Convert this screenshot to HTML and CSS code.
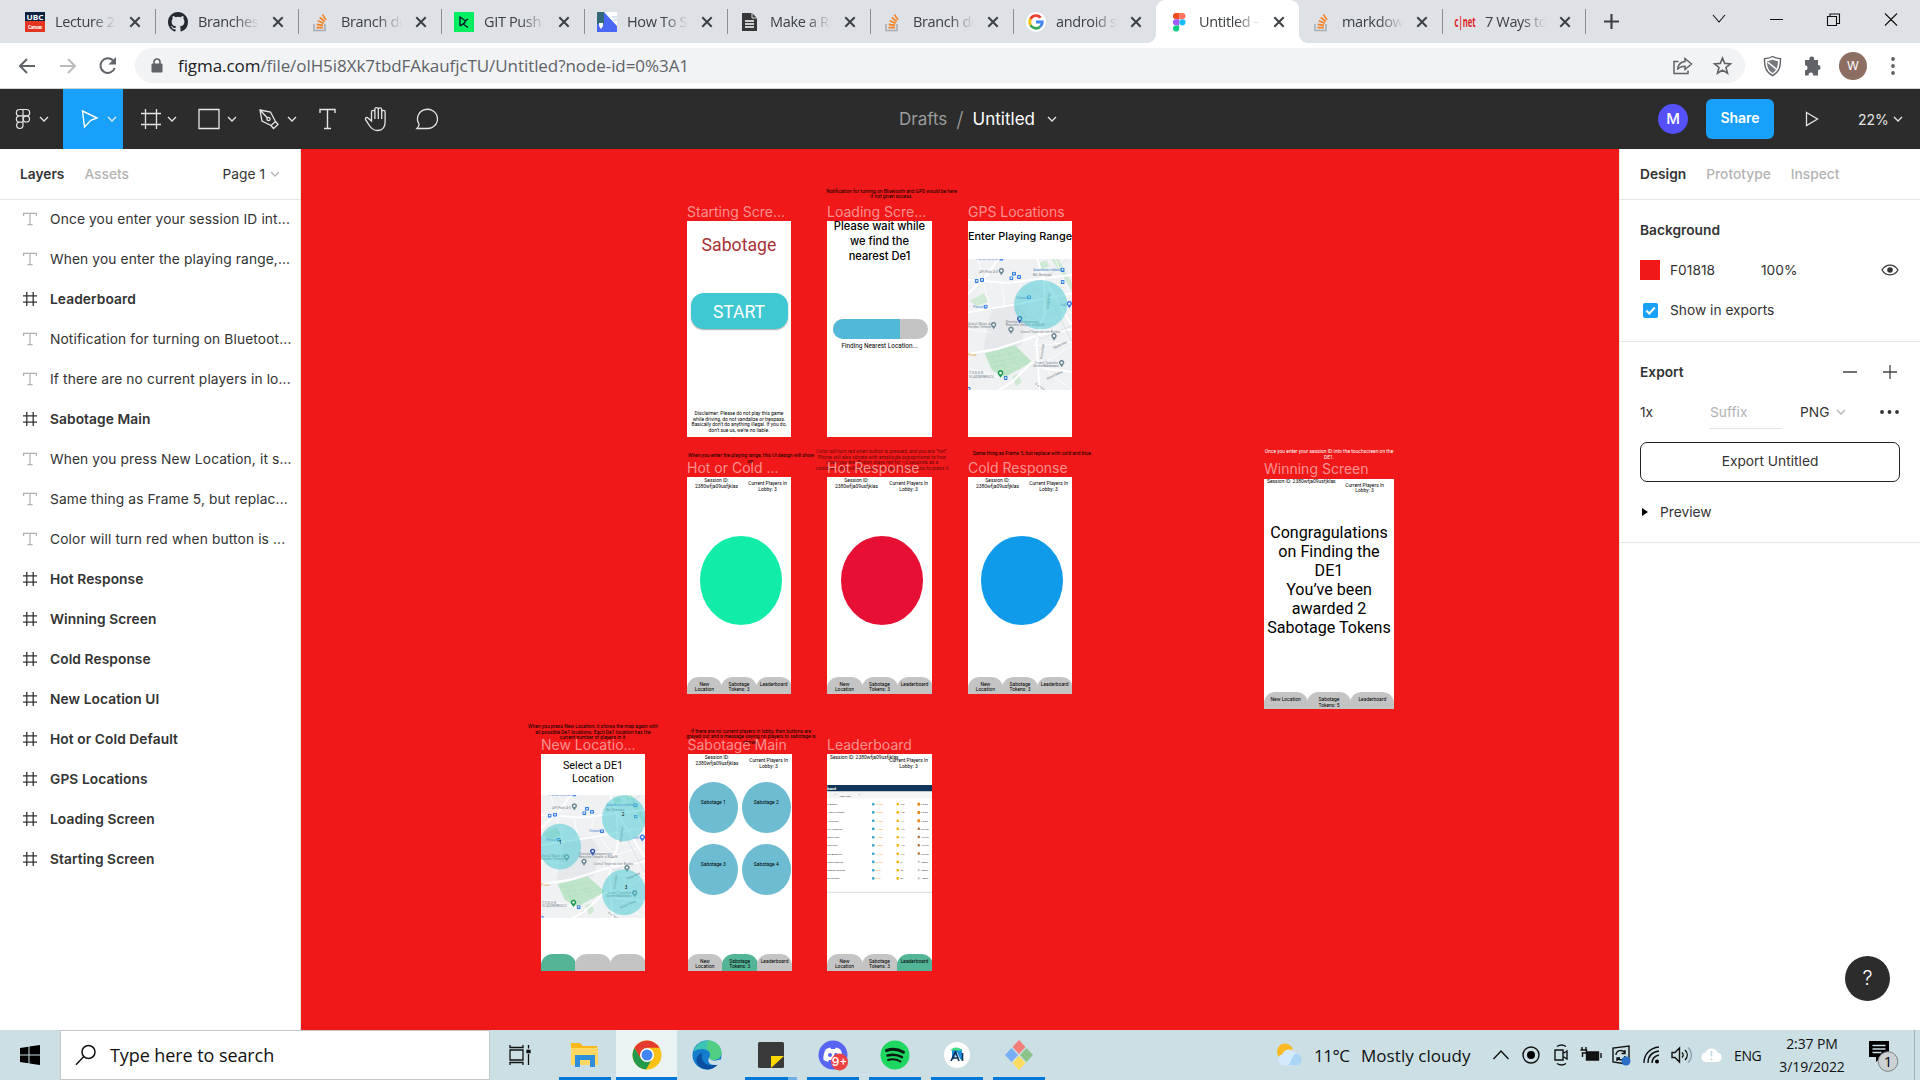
FILE: index.html
```html
<!DOCTYPE html>
<html lang="en">
<head>
<meta charset="utf-8">
<title>Untitled – Figma</title>
<link rel="stylesheet" href="styles.css">
</head>
<body>
<svg class="defs" aria-hidden="true">
  <symbol id="chev" viewBox="0 0 10 10"><path d="M1 3l4 4 4-4" fill="none" stroke="currentColor" stroke-width="1.300"/></symbol>
  <symbol id="x" viewBox="0 0 12 12"><path d="M1.300 1.300l9.400 9.400M10.700 1.300L1.300 10.700" fill="none" stroke="#3c4043" stroke-width="2"/></symbol>
  <symbol id="so" viewBox="0 0 20 20"><path d="M3 12v6.500h11V12" fill="none" stroke="#a9adb3" stroke-width="1.600"/><path d="M5.500 15.700h6.500M5.700 12.300l6.400 1M6.700 8.800l6 2.400M8.700 5.400l5 4.200M11.400 2.500l3.600 5.400" stroke="#f48024" stroke-width="1.700"/></symbol>
  <symbol id="hash" viewBox="0 0 14 14"><path d="M3.800 0v14M10.200 0v14M0 3.800h14M0 10.200h14" stroke="#333" stroke-width="1.300"/></symbol>
  <symbol id="tee" viewBox="0 0 14 14"><path d="M.6 4V1.300h12.800V4M7 1.300v11.300M4.500 12.600h5" fill="none" stroke="#b0b0b0" stroke-width="1.200"/></symbol>
  <symbol id="pin" viewBox="0 0 18 24"><path d="M9 23L3 14a8 8 0 1 1 12 0z"/><circle cx="9" cy="9" r="3.500" fill="#fff"/></symbol>
  <symbol id="bus" viewBox="0 0 12 12"><rect width="12" height="12" rx="3" fill="#2f7de0"/><path d="M3.500 3h5v5h-5z" fill="#e5f0ff"/></symbol>
  <symbol id="map" viewBox="0 0 312 393" preserveAspectRatio="none">
    <path d="M0 0h312v393H0z" fill="#eff1f3"/>
    <path d="M70 145l78-15 30 50-20 80-112 14z" fill="#e6e8eb"/>
    <path d="M5 125l42-22 14 26-34 12zM210 12l26-8 8 18-24 10zM250 0l20-2 42 75v22zM132 352l20-8 8 26-16 12z" fill="#cfe9d5"/>
    <path d="M50 283l91-24 51 50-82 46-39-22z" fill="#bfe5c8"/>
    <path d="M58 296l100-20M66 311l109-20M75 326l106-29M90 281l30 68M115 274l42 56M72 285l20 55" stroke="#a6d5b2" fill="none"/>
    <path d="M0 62l120 10 192-25M0 160l150-25 162-32M0 285l90-16 120-40 102-18M208 0l20 60 2 100-25 90 10 143M0 105l60-60 30-45M190 309l40 20 82 10M192 309l-60 60-40 24M230 60l82 140" stroke="#fff" stroke-width="6" fill="none"/>
    <path d="M30 0l20 90 20 70M100 72l10 70M160 70l-15 60M262 0l50 120M160 180l70 10 82-30M195 260l117-10M215 320l97-60M10 330l100 30M0 210l70 10M240 340l70 50M180 140l90 120" stroke="#fff" stroke-width="2.500" fill="none"/>
    <path d="M232 60l66-60M202 86l55 52 55 110M170 200l50 40 92-40" stroke="#d7dade" stroke-width="2" fill="none"/>
    <g class="map-blue">
      <text x="196" y="36" textLength="82">Academia militară</text>
      <text x="145" y="119" textLength="32">Orizont</text><text x="16" y="147" textLength="30">Parcul</text>
      <text x="275" y="141" textLength="20">Lidl</text><text x="24" y="4" textLength="66">Parcul central</text>
    </g>
    <g class="map-grey">
      <text x="34" y="43" textLength="55">AFI Park 4-5</text><text x="195" y="52" textLength="55">Bd. Ghencea</text>
      <text x="0" y="198" textLength="70">Statul Major al</text><text x="0" y="208" textLength="70">Forțelor Terestre</text>
      <text x="113" y="191" textLength="100">Direcția Management</text><text x="113" y="202" textLength="116">Resurse Umane a MApN</text>
      <text x="158" y="222" textLength="118">Liceul Teoretic Ion Barbu</text>
      <text x="200" y="315" textLength="70">Liceul Teoretic</text><text x="196" y="325" textLength="76">Dimitrie Bolintineanu</text>
      <text x="3" y="346" textLength="42">TUDOR</text><text x="3" y="358" textLength="74">VLADIMIRESCU</text>
      <text transform="translate(242 150) rotate(-84)" textLength="48">Strada Mare</text>
      <text transform="translate(223 300) rotate(-82)" textLength="46">Drumul Sării</text>
      <text transform="translate(258 270) rotate(-25)" textLength="44">Strada Petre</text>
      <text transform="translate(238 362) rotate(-25)" textLength="52">Strada Sebeș</text>
      <text transform="translate(200 376) rotate(35)" textLength="34">Calea</text>
    </g>
    <text x="0" y="291" class="map-orange" textLength="26">Pizza</text>
    <g fill="#6f8993"><use href="#pin" x="91" y="26" width="18" height="24"/><use href="#pin" x="68" y="188" width="18" height="24"/><use href="#pin" x="120" y="202" width="18" height="24"/><use href="#pin" x="249" y="222" width="18" height="24"/><use href="#pin" x="272" y="302" width="18" height="24"/></g>
    <use href="#pin" x="146" y="170" width="18" height="24" fill="#3557b5"/><use href="#pin" x="295" y="125" width="18" height="24" fill="#3f7ee8"/><use href="#pin" x="88" y="332" width="19" height="26" fill="#1e9a50"/>
    <use href="#bus" x="20" y="60" width="12" height="12"/><use href="#bus" x="36" y="57" width="12" height="12"/><use href="#bus" x="124" y="52" width="12" height="12"/><use href="#bus" x="132" y="38" width="12" height="12"/><use href="#bus" x="147" y="48" width="12" height="12"/><use href="#bus" x="277" y="26" width="13" height="13"/><use href="#bus" x="278" y="63" width="12" height="12"/><use href="#bus" x="177" y="109" width="12" height="12"/><use href="#bus" x="47" y="137" width="12" height="12"/><use href="#bus" x="107" y="351" width="12" height="12"/><use href="#bus" x="-4" y="384" width="12" height="12"/><use href="#bus" x="94" y="-7" width="12" height="12"/>
  </symbol>
  <symbol id="coins" viewBox="0 0 100 8">
    <rect x="44.700" y="2.700" width="2.600" height="2.600" rx="1" fill="#35a7cf"/><rect x="69.200" y="2.700" width="2.600" height="2.600" rx="1" fill="#f6b50c"/>
  </symbol>
</svg>

<header class="tabs">
  <div class="tab"><svg class="fav" viewBox="0 0 20 20"><path d="M0 0h20v9H0z" fill="#0c2344"/><path d="M0 9h20v11H0z" fill="#e63423"/><text x="10" y="7.600" font-size="7.500" textLength="17" lengthAdjust="spacingAndGlyphs" class="fav-t">UBC</text><text x="10" y="16.500" font-size="4.500" textLength="14" class="fav-t">Canvas</text></svg><span class="tt">Lecture 2 -</span><svg class="cl"><use href="#x"/></svg></div>
  <div class="tab"><svg class="fav" viewBox="0 0 16 16"><path fill="#24292f" d="M8 0C3.580 0 0 3.580 0 8c0 3.540 2.290 6.530 5.470 7.590.4.070.55-.17.55-.38v-1.490c-2.010.37-2.530-.49-2.690-.94-.09-.23-.48-.94-.82-1.130-.28-.15-.68-.52-.01-.53.63-.01 1.080.58 1.230.82.72 1.210 1.870.87 2.330.66.070-.52.28-.87.51-1.070-1.780-.2-3.640-.89-3.640-3.950 0-.87.31-1.590.82-2.150-.08-.2-.36-1.020.08-2.120 0 0 .67-.21 2.200.82a7.600 7.600 0 0 1 4 0c1.530-1.040 2.200-.82 2.200-.82.44 1.100.16 1.920.08 2.120.51.560.82 1.270.82 2.150 0 3.070-1.870 3.750-3.650 3.950.29.250.54.730.54 1.480v2.200c0 .21.15.46.55.38A8 8 0 0 0 16 8c0-4.420-3.580-8-8-8z"/></svg><span class="tt">Branches -</span><svg class="cl"><use href="#x"/></svg></div>
  <div class="tab"><svg class="fav"><use href="#so"/></svg><span class="tt">Branch deve</span><svg class="cl"><use href="#x"/></svg></div>
  <div class="tab"><svg class="fav" viewBox="0 0 20 20"><path d="M0 0h20v20H0z" fill="#03ef62"/><path d="M6 14V5l5 3.500v2.200L6 14M11 9l3-2M9 12l5 3.500" fill="none" stroke="#05192d" stroke-width="1.400"/></svg><span class="tt">GIT Push an</span><svg class="cl"><use href="#x"/></svg></div>
  <div class="tab"><svg class="fav" viewBox="0 0 20 20"><path d="M0 0h20v20H0z" fill="#fff"/><path d="M0 0h7l13 14v6H0z" fill="#4b67f5"/><path d="M0 0h7v12H0z" fill="#326a78"/><path d="M2 11h4v3l-2 3-2-3z" fill="#fff"/><path d="M15 5h5M16 8h4" stroke="#cdd9e5" stroke-width="1.500"/></svg><span class="tt">How To Set</span><svg class="cl"><use href="#x"/></svg></div>
  <div class="tab"><svg class="fav" viewBox="0 0 20 20"><path d="M2 1h10l5 5v13H2z" fill="#353738"/><path d="M12 1v5h5" fill="none" stroke="#dee1e6"/><path d="M5 9h9M5 12h9M5 15h9" stroke="#fff" stroke-width="1.300"/></svg><span class="tt">Make a REA</span><svg class="cl"><use href="#x"/></svg></div>
  <div class="tab"><svg class="fav"><use href="#so"/></svg><span class="tt">Branch deve</span><svg class="cl"><use href="#x"/></svg></div>
  <div class="tab last"><svg class="fav" viewBox="0 0 20 20"><circle cx="10" cy="10" r="10" fill="#fff"/><g fill="none" stroke-width="2.800"><path d="M14.700 5.600A6.300 6.300 0 0 0 4.500 7" stroke="#ea4335"/><path d="M4.500 7a6.300 6.300 0 0 0 0 6.100" stroke="#fbbc05"/><path d="M4.500 13.100a6.300 6.300 0 0 0 9.700 1.600" stroke="#34a853"/><path d="M14.200 14.700A6.300 6.300 0 0 0 16.300 10H10" stroke="#4285f4"/></g></svg><span class="tt">android stu</span><svg class="cl"><use href="#x"/></svg></div>
  <div class="tab active"><svg class="fav" viewBox="0 0 20 20"><path d="M7 1h3.200v6.200H7A3.100 3.100 0 0 1 7 1z" fill="#f24e1e"/><path d="M10.200 1h3.200a3.100 3.100 0 0 1 0 6.200h-3.200z" fill="#ff7262"/><path d="M7 7.200h3.200v6.200H7a3.100 3.100 0 0 1 0-6.200z" fill="#a259ff"/><circle cx="13.400" cy="10.300" r="3.100" fill="#1abcfe"/><path d="M7 13.400h3.200v3.100A3.100 3.100 0 1 1 7 13.400z" fill="#0acf83"/></svg><span class="tt">Untitled – F</span><svg class="cl"><use href="#x"/></svg></div>
  <div class="tab"><svg class="fav"><use href="#so"/></svg><span class="tt">markdown</span><svg class="cl"><use href="#x"/></svg></div>
  <div class="tab"><svg class="fav" viewBox="0 0 20 20"><text x="10" y="15" font-size="14" textLength="21" lengthAdjust="spacingAndGlyphs" class="cnet">c|net</text></svg><span class="tt">7 Ways to b</span><svg class="cl"><use href="#x"/></svg></div>
  <svg class="newtab" viewBox="0 0 14 14"><path d="M7 0v14M0 7h14" stroke="#3c4043" stroke-width="2"/></svg>
  <svg class="wc" viewBox="0 0 190 20"><g fill="none" stroke="#111" stroke-width="1.100"><path d="M4 6l6 7 6-7M61 10.500h13M118.500 7.500h9v9h-9zM121 7.500V5h9.500v9.500h-3M176 4.500l12 12M188 4.500l-12 12"/></g></svg>
</header>

<div class="nav">
  <svg class="nav-i" viewBox="0 0 110 30"><g fill="none" stroke="#5f6368" stroke-width="2"><path d="M16 15H1M8 8l-7 7 7 7"/><path d="M41 15h15M49 8l7 7-7 7" stroke="#babcbe"/><path d="M94 9.500A7.300 7.300 0 1 0 95.700 17"/></g><path d="M97 6v7.500h-7.500z" fill="#5f6368"/></svg>
  <div class="omni">
    <svg class="lock" viewBox="0 0 12 15"><rect x=".5" y="5.500" width="11" height="9" rx="1" fill="#5f6368"/><path d="M3 6V4a3 3 0 0 1 6 0v2" fill="none" stroke="#5f6368" stroke-width="1.600"/></svg>
    <span class="url"><b>figma.com</b>/file/olH5i8Xk7tbdFAkaufjcTU/Untitled?node-id=0%3A1</span>
    <svg class="omni-i" viewBox="0 0 62 20"><path d="M6.500 5.500H2v12h14v-3M13 2.500l6.500 5.500-6.500 5.500v-3.200c-4 0-6 1-7.500 3.200.5-4.500 3-7.500 7.500-8z" fill="none" stroke="#5f6368" stroke-width="1.500"/><path d="M50.500 2l2.200 5.400 5.800.4-4.500 3.700 1.500 5.700-5-3.100-5 3.100 1.500-5.700-4.500-3.700 5.800-.4z" fill="none" stroke="#5f6368" stroke-width="1.600"/></svg>
  </div>
  <svg class="ext" viewBox="0 0 60 24"><path d="M9.500 2.500c3 1.800 5 2 8 2.200 0 8-1 13-8 17-7-4-8-9-8-17 3-.2 5-.4 8-2.200z" fill="none" stroke="#5f6368" stroke-width="1.400"/><path d="M9.500 5.500c2 1 3.500 1.400 5.500 1.700 0 5-1 8.800-5.500 11.800C5 16 4 12.200 4 7.200c2-.3 3.500-.7 5.500-1.700z" fill="#777b7f"/><path d="M4.500 8l10 8" stroke="#fff" stroke-width="1.600"/><path d="M42 6h4.500a2.500 2.500 0 1 1 4.500 0h4v5a2.500 2.500 0 1 1 0 5v5.500h-5a2.300 2.300 0 1 0-4.300 0H42v-5.200a2.300 2.300 0 1 0 0-5z" fill="#5f6368"/></svg>
  <span class="me">W</span>
  <svg class="kebab" viewBox="0 0 4 20"><circle cx="2" cy="3" r="1.900"/><circle cx="2" cy="10" r="1.900"/><circle cx="2" cy="17" r="1.900"/></svg>
</div>

<div class="toolbar">
  <div class="tool t-menu"><svg width="16" height="22" viewBox="0 0 16 22"><g fill="none" stroke="#e5e5e5" stroke-width="1.200"><path d="M8 1.500H4.500a3.100 3.100 0 0 0 0 6.300H8zM8 1.500h3.500a3.100 3.100 0 0 1 0 6.300H8M8 7.800H4.500a3.100 3.100 0 0 0 0 6.300H8zM8 14.100H4.500A3.200 3.200 0 1 0 8 17.300z"/><circle cx="11.400" cy="10.900" r="3.100"/></g></svg><svg class="cv"><use href="#chev"/></svg></div>
  <div class="tool t-move"><svg width="20" height="20" viewBox="0 0 20 20"><path d="M2.500 2l14.500 7-6.200 2.300L4.500 18z" fill="none" stroke="#fff" stroke-width="1.400"/></svg><svg class="cv"><use href="#chev"/></svg></div>
  <div class="tool t-frame"><svg width="20" height="22" viewBox="0 0 20 22"><path d="M4.500 1v20M15.500 1v20M0 5.500h20M0 16.500h20" stroke="#e5e5e5" stroke-width="1.300"/></svg><svg class="cv"><use href="#chev"/></svg></div>
  <div class="tool t-rect"><svg width="22" height="22" viewBox="0 0 22 22"><path d="M1 1.500h20v19H1z" fill="none" stroke="#e5e5e5" stroke-width="1.300"/></svg><svg class="cv"><use href="#chev"/></svg></div>
  <div class="tool t-pen"><svg width="22" height="22" viewBox="0 0 22 22"><g fill="none" stroke="#e5e5e5" stroke-width="1.300"><path d="M2 2l10.500 2 5 9.500-4.500 4-9-4.500zM2 2l7.500 8"/><circle cx="10.500" cy="11" r="1.600"/><path d="M17.500 13.500l2.500 3-4.500 4-2.500-3"/></g></svg><svg class="cv"><use href="#chev"/></svg></div>
  <svg class="t-text" width="17" height="22" viewBox="0 0 17 22"><path d="M1 5V1.500h15V5M8.500 1.500v19M5 20.500h7" fill="none" stroke="#e5e5e5" stroke-width="1.400"/></svg>
  <svg class="t-hand" width="24" height="26" viewBox="0 0 24 26"><path d="M6.500 15V6a1.700 1.700 0 0 1 3.400 0v7V3.300a1.700 1.700 0 0 1 3.400 0V13 3.600a1.700 1.700 0 0 1 3.400 0V13 6a1.700 1.700 0 0 1 3.400 0v10c0 5-2.600 8.500-7.400 8.500-4 0-6-1.500-8-4.500l-4.100-6.300c-.8-2 1.300-3 2.700-1.500z" fill="none" stroke="#e5e5e5" stroke-width="1.300"/></svg>
  <svg class="t-com" width="24" height="22" viewBox="0 0 24 22"><path d="M2 20.500c1.500-1.500 2.300-2.800 2-4.500A10 9.600 0 1 1 12.500 20.500z" fill="none" stroke="#e5e5e5" stroke-width="1.300"/></svg>
  <div class="crumb"><span class="c1">Drafts</span><span class="sl">/</span><span class="c2">Untitled</span><svg class="cv"><use href="#chev"/></svg></div>
  <div class="right-tools"><span class="mav">M</span><span class="share">Share</span><svg class="play" width="14" height="16" viewBox="0 0 14 16"><path d="M1.500 1.500L12.500 8l-11 6.500z" fill="none" stroke="#e5e5e5" stroke-width="1.300"/></svg><span class="zoom">22%</span><svg class="cv"><use href="#chev"/></svg></div>
</div>

<main class="work">
  <aside class="left">
    <div class="lhead"><span class="on">Layers</span><span class="off">Assets</span><span class="page">Page 1</span><svg class="cv g"><use href="#chev"/></svg></div>
    <ul>
      <li><svg><use href="#tee"/></svg>Once you enter your session ID int...</li>
      <li><svg><use href="#tee"/></svg>When you enter the playing range,...</li>
      <li class="f"><svg><use href="#hash"/></svg>Leaderboard</li>
      <li><svg><use href="#tee"/></svg>Notification for turning on Bluetoot...</li>
      <li><svg><use href="#tee"/></svg>If there are no current players in lo...</li>
      <li class="f"><svg><use href="#hash"/></svg>Sabotage Main</li>
      <li><svg><use href="#tee"/></svg>When you press New Location, it s...</li>
      <li><svg><use href="#tee"/></svg>Same thing as Frame 5, but replac...</li>
      <li><svg><use href="#tee"/></svg>Color will turn red when button is ...</li>
      <li class="f"><svg><use href="#hash"/></svg>Hot Response</li>
      <li class="f"><svg><use href="#hash"/></svg>Winning Screen</li>
      <li class="f"><svg><use href="#hash"/></svg>Cold Response</li>
      <li class="f"><svg><use href="#hash"/></svg>New Location UI</li>
      <li class="f"><svg><use href="#hash"/></svg>Hot or Cold Default</li>
      <li class="f"><svg><use href="#hash"/></svg>GPS Locations</li>
      <li class="f"><svg><use href="#hash"/></svg>Loading Screen</li>
      <li class="f"><svg><use href="#hash"/></svg>Starting Screen</li>
    </ul>
  </aside>

  <section class="canvas">
    <p class="note n1">Notification for turning on Bluetooth and GPS would be here<br>if not given access.</p>
    <p class="note n2">When you enter the playing range, this UI design will show<br>up.</p>
    <p class="note n3">Color will turn red when button is pressed, and you are “hot”.<br>Phone will also vibrate with amplitude popoprtional to how<br>close you are. Button stays red for ~3 seconds as a<br>cooldown and will blink back to green to allow you to press it</p>
    <p class="note n4">Same thing as Frame 5, but replace with cold and blue.</p>
    <p class="note n5">Once you enter your session ID into the touchscreen on the<br>DE1.</p>
    <p class="note n6">When you press New Location, it shows the map again with<br>all possible De1 locations. Each De1 location has the<br>current number of players in it.</p>
    <p class="note n7">If there are no current players in lobby, then buttons are<br>greyed out and a message saying no players to sabotage is<br>shown.</p>

    <div class="item p1"><h3>Starting Scre...</h3><div class="phone start">
      <div class="logo">Sabotage</div><div class="btn">START</div>
      <p class="disc">Disclaimer: Please do not play this game<br>while driving, do not vandalize or trespass.<br>Basically don’t do anything illegal. If you do,<br>don’t sue us, we’re no liable.</p></div></div>
    <div class="item p2"><h3>Loading Scre...</h3><div class="phone">
      <div class="wait">Please wait while<br>we find the<br>nearest De1</div><div class="bar"><i></i></div><div class="cap">Finding Nearest Location...</div></div></div>
    <div class="item p3"><h3>GPS Locations</h3><div class="phone">
      <div class="range">Enter Playing Range</div>
      <svg class="map1" viewBox="0 0 312 393" preserveAspectRatio="none"><use href="#map" width="312" height="393"/><ellipse cx="218" cy="137" rx="80" ry="74" fill="#3fc8d2" fill-opacity=".5"/></svg></div></div>

    <div class="item p4"><h3>Hot or Cold ...</h3><div class="phone">
      <div class="sess">Session ID:<br>2380wfja09usfjklas</div><div class="cur">Current Players In<br>Lobby: 3</div><div class="dot green"></div>
      <div class="foot"><span>New<br>Location</span><span>Sabotage<br>Tokens: 3</span><span>Leaderboard</span></div></div></div>
    <div class="item p5"><h3>Hot Response</h3><div class="phone">
      <div class="sess">Session ID:<br>2380wfja09usfjklas</div><div class="cur">Current Players In<br>Lobby: 3</div><div class="dot red"></div>
      <div class="foot"><span>New<br>Location</span><span>Sabotage<br>Tokens: 3</span><span>Leaderboard</span></div></div></div>
    <div class="item p6"><h3>Cold Response</h3><div class="phone">
      <div class="sess">Session ID:<br>2380wfja09usfjklas</div><div class="cur">Current Players In<br>Lobby: 3</div><div class="dot blue"></div>
      <div class="foot"><span>New<br>Location</span><span>Sabotage<br>Tokens: 3</span><span>Leaderboard</span></div></div></div>
    <div class="item p7"><h3>Winning Screen</h3><div class="phone win">
      <div class="sess one">Session ID: 2380wfja09usfjklas</div><div class="cur">Current Players In<br>Lobby: 3</div>
      <div class="grats">Congragulations<br>on Finding the<br>DE1<br>You’ve been<br>awarded 2<br>Sabotage Tokens</div>
      <div class="foot"><span>New Location</span><span>Sabotage<br>Tokens: 5</span><span>Leaderboard</span></div></div></div>

    <div class="item p8"><h3>New Locatio...</h3><div class="phone">
      <div class="sel">Select a DE1<br>Location</div>
      <svg class="map2" viewBox="0 0 312 371" preserveAspectRatio="none"><use href="#map" width="312" height="371"/><g fill="#3fc8d2" fill-opacity=".5"><ellipse cx="249" cy="70" rx="66" ry="69"/><ellipse cx="57" cy="155" rx="63" ry="69"/><ellipse cx="249" cy="292" rx="66" ry="69"/></g><g class="map-n"><text x="246" y="63">2</text><text x="58" y="147">1</text><text x="255" y="281">3</text></g></svg>
      <div class="foot"><span class="hi"></span><span></span><span></span></div></div></div>
    <div class="item p9"><h3>Sabotage Main</h3><div class="phone">
      <div class="sess">Session ID:<br>2380wfja09usfjklas</div><div class="cur">Current Players In<br>Lobby: 3</div>
      <div class="grid4"><span>Sabotage 1</span><span>Sabotage 2</span><span>Sabotage 3</span><span>Sabotage 4</span></div>
      <div class="foot"><span>New<br>Location</span><span class="hi">Sabotage<br>Tokens: 3</span><span>Leaderboard</span></div></div></div>
    <div class="item p10"><h3>Leaderboard</h3><div class="phone">
      <div class="sess one">Session ID: 2380wfja09usfjklas</div><div class="cur">Current Players In<br>Lobby: 3</div>
      <svg class="board" viewBox="0 0 104.500 108"><path d="M0 0h105v6.600H0z" fill="#12365a"/><path d="M0 6.600h105v7H0z" fill="#f5f5f6"/><path d="M0 107.300h105" stroke="#ddd"/>
        <text x="0" y="4.600" class="bw">board</text><text x="12.500" y="11.800" class="bn" textLength="11">Filter: User</text><text x="7" y="10" class="bn">⌄</text><text x="31" y="10" class="bn">⌄</text>
        <g class="bn"><text y="20">la Becker</text><text y="28.200">, Jane Whitman</text><text y="36.500">, Levinson</text><text y="44.700">rry Hammond</text><text y="53">edith Kurts</text><text y="61.200">ela Travis</text><text y="69.500">rea Anderson</text><text y="77.700">nnifer Dawson</text><text y="86">stopher Garland</text><text y="94.200">ke Leonard</text></g>
        <g class="bo"><text x="48" y="20">12,450</text><text x="48" y="28.200">12,300</text><text x="48" y="36.500">12,250</text><text x="48" y="44.700">11,980</text><text x="48" y="53">11,900</text><text x="48" y="61.200">11,860</text><text x="48" y="69.500">11,740</text><text x="48" y="77.700">10,440</text><text x="48" y="86">9,857</text><text x="48" y="94.200">9,201</text></g>
        <g class="bn"><text x="73" y="20">123</text><text x="73" y="28.200">118</text><text x="73" y="36.500">117</text><text x="73" y="44.700">113</text><text x="73" y="53">114</text><text x="73" y="61.200">110</text><text x="73" y="69.500">112</text><text x="73" y="77.700">91</text><text x="73" y="86">90</text><text x="73" y="94.200">89</text></g>
        <g class="bn"><text x="93.500" y="20">3 Gold</text><text x="93.500" y="28.200">3 Gold</text><text x="93.500" y="36.500">2 Gold</text><text x="93.500" y="44.700">5 Silver</text><text x="93.500" y="53">4 Silver</text><text x="93.500" y="61.200">4 Silver</text><text x="93.500" y="69.500">3 Silver</text><text x="93.500" y="77.700">2 Base</text><text x="93.500" y="86">2 Base</text><text x="93.500" y="94.200">1 Base</text></g>
        <use href="#coins" y="15.200" width="100" height="8"/><use href="#coins" y="23.400" width="100" height="8"/><use href="#coins" y="31.700" width="100" height="8"/><use href="#coins" y="39.900" width="100" height="8"/><use href="#coins" y="48.200" width="100" height="8"/><use href="#coins" y="56.400" width="100" height="8"/><use href="#coins" y="64.700" width="100" height="8"/><use href="#coins" y="72.900" width="100" height="8"/><use href="#coins" y="81.200" width="100" height="8"/><use href="#coins" y="89.400" width="100" height="8"/>
        <path d="M91.500 17.700v3M91.500 25.900v3M91.500 34.200v3" stroke="#f08a1c" stroke-width="2.600"/><path d="M91.500 42.500v2.500M91.500 50.800v2.500M91.500 59v2.500M91.500 67.200v2.500" stroke="#a96c3a" stroke-width="2"/><path d="M91.500 75.500v2.500M91.500 83.800v2.500M91.500 92v2.500" stroke="#c5c8cc" stroke-width="1.800"/>
      </svg>
      <div class="foot"><span>New<br>Location</span><span>Sabotage<br>Tokens: 3</span><span class="hi">Leaderboard</span></div></div></div>
  </section>

  <aside class="right">
    <div class="rhead"><span class="on">Design</span><span class="off">Prototype</span><span class="off">Inspect</span></div>
    <div class="sec s1">
      <div class="row b">Background</div>
      <div class="row"><i class="sw"></i><span class="hex">F01818</span><span>100%</span><svg class="end eye" width="18" height="12" viewBox="0 0 18 12"><path d="M1 6c4-6.500 12-6.500 16 0-4 6.500-12 6.500-16 0z" fill="none" stroke="#333" stroke-width="1.300"/><circle cx="9" cy="6" r="2.800" fill="#333"/></svg></div>
      <div class="row"><svg class="chk" width="15" height="15" viewBox="0 0 15 15"><rect width="15" height="15" rx="2" fill="#18a0fb"/><path d="M3.300 7.500l3 3 5.500-6" fill="none" stroke="#fff" stroke-width="2"/></svg><span>Show in exports</span></div>
    </div>
    <div class="sec s2">
      <div class="row b">Export<svg class="end" width="54" height="14" viewBox="0 0 54 14"><path d="M0 7h14M40 7h14M47 0v14" stroke="#444" stroke-width="1.300"/></svg></div>
      <div class="row"><span class="onex">1x</span><span class="suf">Suffix</span><span>PNG</span><svg class="cv g"><use href="#chev"/></svg><svg class="end dots" width="20" height="4" viewBox="0 0 20 4"><circle cx="2" cy="2" r="1.900"/><circle cx="9.500" cy="2" r="1.900"/><circle cx="17" cy="2" r="1.900"/></svg></div>
      <div class="exp">Export Untitled</div>
      <div class="row pre"><svg width="6" height="8" viewBox="0 0 6 8"><path d="M0 0l6 4-6 4z"/></svg><span>Preview</span></div>
    </div>
    <div class="help">?</div>
  </aside>
</main>

<footer class="taskbar">
  <svg class="win-i" viewBox="0 0 20 20"><path d="M0 3l8.500-1.300v7.800H0zM9.500 1.500L20 0v9.500H9.500zM0 10.500h8.500v7.800L0 17zM9.500 10.500H20V20L9.500 18.500z"/></svg>
  <div class="search"><svg width="22" height="22" viewBox="0 0 22 22"><circle cx="13.500" cy="8" r="6.500" fill="none" stroke="#111" stroke-width="1.500"/><path d="M8.800 12.500L1 20.800" stroke="#111" stroke-width="1.500"/></svg><span>Type here to search</span></div>
  <svg class="tv" viewBox="0 0 22 20"><g fill="none" stroke="#111" stroke-width="1.300"><path d="M1 5h13v10H1zM1 0v2.500h13V0M1 20v-2.500h13V20M19.500 0v3.500M19.500 9v11"/><path d="M18 5.500h3v2h-3z" fill="#111"/></g></svg>
  <div class="apps">
    <div class="app"><svg viewBox="0 0 30 30"><path d="M1 3h9l3 3h14v19H1z" fill="#f7b91c"/><path d="M1 8h27v17H1z" fill="#ffd763"/><path d="M5 27V15h20v12h-5v-7h-10v7z" fill="#2d8fd9"/></svg></div>
    <div class="app cur-app"><svg viewBox="0 0 30 30"><circle cx="15" cy="15" r="14.500" fill="#fbc116"/><path d="M15 15L2.500 7.700A14.500 14.500 0 0 1 27.500 7.700H15z" fill="#e33b2e"/><path d="M2.500 7.700A14.500 14.500 0 0 0 14 29.500l6.500-11.300L9 18.200z" fill="#229a4a"/><path d="M2.500 7.700l6.300 10.900L15 8z" fill="#e33b2e"/><circle cx="15" cy="15" r="7" fill="#fff"/><circle cx="15" cy="15" r="5.500" fill="#4285f4"/></svg></div>
    <div class="app no"><svg viewBox="0 0 30 30"><circle cx="15" cy="15" r="14.500" fill="#147dcc"/><path d="M1 12C4 3 11 .5 16 .5c8 0 13.500 6 13.500 12 0 5-4 7.500-8 7.500-3 0-5-1-4-3 2-4-2-8-7-8-4 0-8 1-9.500 3z" fill="#3cc4b4"/><path d="M16 .5c8 0 13.500 6 13.500 12 0 5-4 7.500-8 7.500-3 0-5-1-4-3 2-4 0-7-3-8z" fill="#5fd65f" opacity=".6"/><path d="M10 13c-2 9 5 15 16 11-5 7-15 7-20 1-4-6 0-11 4-12z" fill="#0b4fa0"/><path d="M17.500 17c-1 3 5 5 10.500 2.500l2 1-3 4c-8 2-13-2-9.500-7.500z" fill="#cbdfe5"/></svg></div>
    <div class="app stk"><svg viewBox="0 0 30 30"><rect x="2" y="2" width="26" height="26" rx="1.500" fill="#3a3a3a"/><path d="M15 28V16h13z" fill="#ffd800"/></svg></div>
    <div class="app"><svg viewBox="0 0 30 30"><circle cx="15" cy="15" r="14.500" fill="#5865f2"/><path d="M8 9l4-1.500 1 1.500h4l1-1.500L22 9c2 3 3 7 2.500 11L20 22l-1-2h-8l-1 2-4.500-2C5 16 6 12 8 9z" fill="#fff"/><circle cx="12" cy="15" r="2" fill="#5865f2"/><circle cx="18" cy="15" r="2" fill="#5865f2"/><circle cx="21.500" cy="22" r="8.500" fill="#ed4245"/><text x="21.500" y="26" class="nine">9+</text></svg></div>
    <div class="app"><svg viewBox="0 0 30 30"><circle cx="15" cy="15" r="14.500" fill="#1ed760"/><g fill="none" stroke="#0b1a10" stroke-linecap="round"><path d="M6.500 10.500c6-2 12-1.200 17 1.700" stroke-width="3"/><path d="M7.500 15.500c5-1.500 10-1 14.500 1.600" stroke-width="2.500"/><path d="M8 20c4.500-1.200 8.500-.8 12.500 1.500" stroke-width="2"/></g></svg></div>
    <div class="app"><svg viewBox="0 0 30 30"><circle cx="15" cy="15" r="13" fill="#fff"/><path d="M10 9h10v11l-2-1-3-7-3 7-2 1z" fill="#1d8fe0"/><path d="M9 21l4.500-9.500L17 21M11 18h5M20.500 13v8" stroke="#103057" stroke-width="1.600" fill="none"/><path d="M8.500 10.500c2-4 9-4 12 0z" fill="#3ddc84"/></svg></div>
    <div class="app"><svg viewBox="0 0 30 30"><path d="M15 0l6.500 7-6.500 7-6.500-7z" fill="#f37f7b"/><path d="M7.500 8l6.500 7-6.500 7L1 15z" fill="#77aef5"/><path d="M22.500 8l6.500 7-6.500 7-6.500-7z" fill="#8bc48a"/><path d="M15 16l6.500 7-6.500 7-6.500-7z" fill="#fadd5e"/></svg></div>
  </div>
  <div class="tray">
    <svg class="wx" width="26" height="24" viewBox="0 0 26 24"><circle cx="9" cy="8.500" r="8" fill="#fbb924"/><path d="M7 22.500a6 6 0 0 1-.5-11.500A7 7 0 0 1 19 10a6.300 6.300 0 0 1 0 12.500z" fill="#d3eafb"/><path d="M12 22c3-1 3-9 8-11.500a6 6 0 0 1-1 12z" fill="#a9d6f7"/></svg>
    <span class="temp">11°C</span><span class="cloudy">Mostly cloudy</span>
    <svg class="icons" width="230" height="24" viewBox="0 0 230 24"><g fill="none" stroke="#111" stroke-width="1.400"><path d="M1.500 16l7.500-8 7.500 8"/><circle cx="39" cy="12" r="8"/><path d="M63 7h8v10h-8zM71 10.500l4-2.500v8l-4-2.500M65 3.500c3-2 6-2 9 0M65 20.500c3 2 6 2 9 0"/><path d="M94.500 9h12v8h-12z" fill="#111"/><path d="M109 10v5M90 4v3M94 4v3M88.500 7h6v3h-4v4"/><path d="M137 16.500V3l-16 2v14l10 1.500M124 12c0-5 7-6 9-2M133 7v3.500h-3.500M133 13c0 4-6 5-8 2M125 18v-3h3"/><path d="M152 20c0-9 6-15 15-16M156 20c0-7 4-11 11-12M160 20c0-4 3-7 7-8"/><path d="M180 9.500h3l4.500-4.500v14l-4.500-4.500h-3zM190 9.500c1.500 1.500 1.500 3.500 0 5M193 7c3 3 3 7 0 10"/><path d="M196 4.500c4.500 4 4.500 11 0 15" stroke="#8ba1a8"/></g><circle cx="39" cy="12" r="4" /><circle cx="165" cy="18.500" r="2"/><circle cx="134" cy="18" r="4.500" fill="#2a70c8"/><path d="M213.500 19a4.800 4.800 0 0 1 0-9.500 6.500 6.500 0 0 1 12 0 4.800 4.800 0 0 1 0 9.500z" fill="#fff"/><path d="M219.500 8v5.500M219.500 15.500v2" stroke="#c0d8df" stroke-width="1.700"/></svg>
    <span class="eng">ENG</span>
    <div class="clock"><span>2:37 PM</span><span>3/19/2022</span></div>
    <svg class="ac" width="32" height="34" viewBox="0 0 32 34"><path d="M1 3h20v16h-8l-5 5v-5H1z"/><path d="M4.500 7.500h13M4.500 11h13M4.500 14.500h9" stroke="#cbdfe5" stroke-width="1.300"/><circle cx="20" cy="23.500" r="9.800" fill="#ccd2d4" stroke="#7b8387"/><text x="20" y="29" class="one-b">1</text></svg>
    <i class="desk"></i>
  </div>
</footer>
</body>
</html>
```

FILE: styles.css
```css
* { box-sizing: border-box; margin: 0; padding: 0; }
body { width: 1920px; height: 1080px; overflow: hidden; display: flex; flex-direction: column; font-family: "Inter", "Liberation Sans", sans-serif; background: #fff; color: #333; }
.defs { position: absolute; width: 0; height: 0; }
svg { flex: none; display: block; overflow: visible; }
.cv { width: 10px; height: 10px; color: #e5e5e5; }
.cv.g { color: #b3b3b3; }

/* browser tabs */
.tabs { height: 43px; flex: none; background: #dee1e6; display: flex; align-items: center; padding-left: 12px; font-family: "Open Sans", "Noto Sans", sans-serif; }
.tab { width: 143px; height: 43px; flex: none; display: flex; align-items: center; padding-left: 13px; position: relative; }
.tab::after { content: ""; position: absolute; right: -1px; top: 9px; width: 1px; height: 25px; background: #8b8e92; }
.tab.last::after, .tab.active::after { display: none; }
.tab.active { background: #fff; border-radius: 9px 9px 0 0; }
.tab.active::before { content: ""; position: absolute; left: -10px; right: -10px; bottom: 0; height: 10px; background: radial-gradient(circle at 0 0, transparent 10px, #fff 10.500px) 0 0 / 10px 10px no-repeat, radial-gradient(circle at 100% 0, transparent 10px, #fff 10.500px) 100% 0 / 10px 10px no-repeat; }
.fav { width: 20px; height: 20px; }
.fav-t { fill: #fff; font-weight: 700; text-anchor: middle; }
.cnet { fill: #e02020; font-weight: 700; text-anchor: middle; }
.tt { width: 61px; margin-left: 10px; font-size: 14.500px; letter-spacing: -.35px; white-space: nowrap; overflow: hidden; color: #3c4043; -webkit-mask-image: linear-gradient(90deg, #000 60%, transparent); mask-image: linear-gradient(90deg, #000 60%, transparent); }
.cl { width: 12px; height: 12px; margin-left: 13px; }
.newtab { width: 15px; height: 15px; margin-left: 19px; }
.wc { width: 190px; height: 20px; margin-left: 90px; margin-bottom: 5px; }

/* address bar */
.nav { height: 46px; flex: none; display: flex; align-items: center; border-bottom: 1px solid #d0d2d5; padding-left: 19px; }
.nav-i { width: 110px; height: 30px; margin-right: 6px; }
.omni { width: 1610px; height: 35px; border-radius: 18px; background: #f1f3f4; display: flex; align-items: center; padding-left: 16px; }
.lock { width: 12px; height: 15px; }
.url { margin-left: 15px; font: 17px "Open Sans", "Noto Sans", sans-serif; color: #5f6368; letter-spacing: -.07px; white-space: nowrap; }
.url b { font-weight: 400; color: #202124; }
.omni-i { width: 62px; height: 20px; margin-left: auto; margin-right: 11px; }
.ext { width: 60px; height: 24px; margin-left: 18px; }
.me { width: 28px; height: 28px; border-radius: 50%; background: #8d6e63; color: #fff; font-size: 12px; line-height: 28px; text-align: center; margin-left: 16px; }
.kebab { width: 4px; height: 20px; margin-left: 24px; fill: #5f6368; }

/* editor toolbar */
.toolbar { height: 60px; flex: none; background: #2c2c2c; display: flex; align-items: center; color: #fff; }
.tool { height: 60px; display: flex; align-items: center; justify-content: flex-end; }
.tool > svg + svg { margin-left: 8px; }
.t-menu { width: 63px; padding-right: 14px; }
.t-move { width: 60px; background: #18a0fb; padding-right: 6px; }
.t-move > svg + svg { margin-left: 7px; }
.t-frame { width: 54px; }
.tool.t-frame > svg + svg { margin-left: 6px; }
.t-rect { width: 60px; }
.tool.t-rect > svg + svg { margin-left: 7px; }
.t-pen { width: 60px; }
.tool.t-pen > svg + svg { margin-left: 7px; }
.t-text { margin-left: 22px; }
.t-hand { margin-left: 29px; }
.t-com { margin-left: 26px; }
.crumb { margin-left: 460px; display: flex; align-items: center; font-size: 17px; width: 162px; }
.c1, .sl { color: #9c9c9c; }
.sl { font-size: 21px; font-weight: 300; margin: 0 9px; }
.crumb .cv { margin-left: 12px; }
.right-tools { margin-left: auto; display: flex; align-items: center; padding-right: 17px; }
.mav { width: 30px; height: 30px; border-radius: 50%; background: #5551ff; font-size: 15px; line-height: 30px; text-align: center; font-weight: 500; }
.share { width: 68px; height: 40px; margin-left: 18px; border-radius: 6px; background: #18a0fb; font-size: 14px; font-weight: 600; line-height: 38px; text-align: center; }
.play { margin-left: 31px; }
.zoom { margin-left: 39px; font-size: 14px; color: #e5e5e5; width: 30px; }
.right-tools .cv { margin-left: 5px; }

/* work area */
.work { height: 881px; display: flex; font-size: 13.750px; }
.left { width: 301px; border-right: 1px solid #e5e5e5; background: #fff; }
.lhead { height: 51px; border-bottom: 1px solid #e5e5e5; padding-left: 20px; display: flex; align-items: center; }
.on { font-weight: 600; color: #333; }
.off { font-weight: 500; color: #b3b3b3; margin-left: 20px; }
.page { margin-left: auto; }
.lhead .cv { margin: 0 20px 0 5px; }
ul { list-style: none; margin-top: -1px; }
li { height: 40px; display: flex; align-items: center; padding-left: 23px; white-space: nowrap; letter-spacing: .13px; }
li svg { width: 14px; height: 14px; margin-right: 13px; }
li.f { font-weight: 600; letter-spacing: .08px; }

.canvas { width: 1318px; background: #f01818; position: relative; overflow: hidden; font-family: "Roboto", sans-serif; color: #000; }
.item { position: absolute; width: 104px; }
.item h3 { height: 18px; font: 400 14px/18px "Inter", sans-serif; color: #fb9090; white-space: nowrap; }
.phone { height: 216px; background: #fff; position: relative; overflow: hidden; text-align: center; display: flex; flex-direction: column; align-items: center; }
.p1, .p2, .p3 { top: 54px; } .p4, .p5, .p6 { top: 310px; } .p8, .p9, .p10 { top: 587px; }
.p1, .p4 { left: 386px; } .p2, .p5, .p10 { left: 526px; width: 105px; } .p3, .p6 { left: 667px; }
.p8 { left: 240px; } .p9 { left: 386.500px; width: 104.500px; }
.p7 { left: 963px; top: 311px; width: 130px; }
.p7 h3 { height: 18.500px; }
.p4 .phone, .p5 .phone, .p6 .phone, .p8 .phone, .p9 .phone, .p10 .phone { height: 216.600px; }
.note { position: absolute; font-size: 4.950px; line-height: 5.600px; text-align: center; white-space: nowrap; transform: translateX(-50%); }
.n1 { left: 590.500px; top: 39.500px; } .n2 { left: 450px; top: 304px; } .n3 { left: 581px; top: 300px; color: rgba(0,0,0,.65); } .n4 { left: 731.500px; top: 302px; } .n5 { left: 1028px; top: 300px; color: #fff; } .n6 { left: 292px; top: 575px; } .n7 { left: 450px; top: 579.500px; }
.logo { margin-top: 13px; font-size: 17.700px; line-height: 22px; color: #a83236; }
.btn { width: 97px; height: 36px; margin-top: 37px; border-radius: 13px; background: #3fc7d2; color: #fff; font-size: 17.500px; line-height: 38px; box-shadow: 0 1px 1.500px rgba(0,0,0,.35); }
.disc { margin-top: 82px; font-size: 4.950px; line-height: 5.600px; white-space: nowrap; }
.wait { margin-top: -2.500px; font: 500 11.100px/15px "Inter", sans-serif; white-space: nowrap; }
.bar { width: 95px; height: 20px; margin: 55.500px 0 0 1px; border-radius: 10px; overflow: hidden; background: #c4c4c4; }
.bar i { display: block; width: 67px; height: 20px; background: #52b8da; }
.cap { font-size: 6.400px; line-height: 8px; margin-top: 2.500px; white-space: nowrap; }
.range { font: 500 10.900px/14px "Inter", sans-serif; margin-top: 8px; white-space: nowrap; }
.map1 { width: 104px; height: 131px; margin-top: 16px; overflow: hidden; }
.map2 { width: 104px; height: 123.500px; margin-top: 10px; overflow: hidden; }
.map-blue { font-size: 11px; fill: #4c86cf; } .map-grey { font-size: 10px; fill: #75818a; } .map-orange { font-size: 10px; fill: #e59a3c; }
.map-n { font-size: 14px; fill: #000; text-anchor: middle; }
.sess, .cur { position: absolute; font-size: 4.950px; line-height: 5.600px; white-space: nowrap; }
.sess { left: 8px; top: 1.200px; } .cur { right: 4px; top: 4px; } .sess.one { left: 3px; top: .6px; } .win .cur { right: 10px; }
.dot { width: 82px; height: 88.500px; border-radius: 50%; margin-top: 59px; margin-left: 4px; }
.green { background: #12eca9; } .red { background: #e80f35; } .blue { background: #0f9be9; }
.foot { position: absolute; left: 0; right: 0; bottom: 0; height: 17px; display: flex; font-size: 4.950px; line-height: 5.600px; }
.foot span { flex: 1; margin: 0 -.5px; background: #c4c4c4; border-radius: 12px 12px 0 0 / 11px 11px 0 0; padding-top: 5.300px; white-space: nowrap; }
.foot .hi { background: #54b498; }
.phone.win { height: 230.500px; }
.grats { margin-top: 45.500px; font-size: 16.100px; line-height: 18.900px; white-space: nowrap; }
.sel { margin-top: 4.500px; font-size: 10.800px; line-height: 13px; }
.grid4 { margin-top: 28px; display: grid; grid-template-columns: 48.500px 48.500px; gap: 11px 4.500px; font-size: 4.950px; }
.grid4 span { height: 51px; border-radius: 50%; background: #6dbcd1; padding-top: 16.500px; }
.board { width: 105px; height: 108px; margin-top: 30.500px; overflow: hidden; }
.bn { font-size: 2.500px; fill: #333; } .bo { font-size: 2.500px; fill: #f2a51e; } .bw { font-size: 3.400px; fill: #fff; font-weight: 700; }

.right { width: 301px; border-left: 1px solid #e5e5e5; background: #fff; position: relative; }
.rhead { height: 51px; border-bottom: 1px solid #e5e5e5; padding-left: 20px; display: flex; align-items: center; }
.sec { border-bottom: 1px solid #e5e5e5; padding-left: 20px; padding-right: 20px; }
.s1 { height: 142px; padding-top: 10px; } .s2 { height: 201px; padding-top: 10px; }
.row { height: 40px; display: flex; align-items: center; }
.row.b { font-weight: 600; }
.end { margin-left: auto; margin-right: 3px; }
.end.eye { margin-right: 1px; }
.sw { width: 20px; height: 20px; background: #f01818; margin-right: 10px; }
.hex { width: 91px; }
.chk { margin: 0 12px 0 3px; }
.onex { width: 69px; }
.suf { width: 73px; height: 33px; line-height: 33px; border-bottom: 1px solid #e5e5e5; color: #b3b3b3; margin-right: 18px; padding-left: 1px; }
.row .cv { margin-left: 7px; }
.end.dots { margin-right: 0; fill: #333; }
.exp { height: 40px; margin-top: 10px; border: 1px solid #222; border-radius: 7px; text-align: center; line-height: 37px; }
.pre { margin-top: 10px; } .pre svg { margin: 0 12px 0 2px; }
.help { position: absolute; right: 30px; bottom: 29px; width: 45px; height: 45px; border-radius: 50%; background: #2c2c2c; color: #fff; font-size: 20px; font-weight: 300; line-height: 45px; text-align: center; }

/* taskbar */
.taskbar { height: 50px; flex: none; background: #cbdfe5; display: flex; align-items: center; font-family: "Open Sans", "Noto Sans", sans-serif; color: #111; }
.win-i { width: 20px; height: 20px; margin: 0 20px; }
.search { width: 430px; height: 50px; background: #fff; border: 1px solid #c4c8ca; display: flex; align-items: center; padding-left: 14px; font-size: 18px; letter-spacing: -.08px; }
.search span { margin-left: 13px; }
.tv { width: 22px; height: 20px; margin: 0 28px 0 19px; }
.apps { display: flex; }
.app { width: 52px; margin-right: 10px; height: 50px; display: flex; align-items: center; justify-content: center; border-bottom: 3px solid #0078d7; padding-top: 3px; }
.app svg { width: 30px; height: 30px; }
.cur-app { width: 61px; margin: 0 0 0 -5px; background: #ebf2f4; }
.no { border-color: transparent; width: 60px; margin-right: 8px; }
.stk { border-image: linear-gradient(90deg, #0078d7 82%, #6cb0e6 82%) 1; border-width: 0 0 3px; border-style: solid; }
.nine { font: 500 12px "Inter", sans-serif; fill: #fff; text-anchor: middle; }
.tray { margin-left: auto; display: flex; align-items: center; }
.temp { margin-left: 12px; font-size: 17px; letter-spacing: -.5px; width: 47px; }
.cloudy { font-size: 17px; letter-spacing: .05px; width: 112px; white-space: nowrap; }
.icons { margin-left: 19px; }
.eng { font-size: 14px; margin-left: 12px; width: 30px; letter-spacing: -.4px; }
.clock { width: 80px; margin-left: 8px; font-size: 14px; line-height: 23px; letter-spacing: -.1px; display: flex; flex-direction: column; align-items: center; }
.ac { margin-left: 16px; }
.one-b { font: 15px "Open Sans", sans-serif; text-anchor: middle; }
.desk { width: 1px; height: 50px; background: #9fb3ba; margin: 0 5px 0 14px; }
```
